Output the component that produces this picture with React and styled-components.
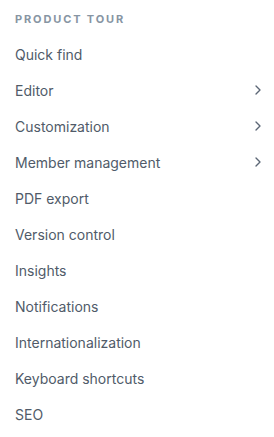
import React from "react";
import styled, { createGlobalStyle } from "styled-components";

const GlobalStyle = createGlobalStyle`
  body {
    margin: 0;
    background: #ffffff;
    font-family: Inter, "Noto Sans", sans-serif;
  }
`;

const Nav = styled.nav`
  width: 274px;
  padding: 12px 8px 0 15px;
  box-sizing: border-box;
`;

const Heading = styled.div`
  font-size: 11px;
  font-weight: 700;
  letter-spacing: 0.17em;
  color: #8795a3;
  line-height: 15px;
  margin-bottom: 9px;
`;

const List = styled.ul`
  list-style: none;
  margin: 0;
  padding: 0;
`;

const Item = styled.li`
  display: flex;
  align-items: center;
  justify-content: space-between;
  height: 36px;
  font-size: 14px;
  color: #505b69;
  cursor: pointer;
`;

const Chevron = () => (
  <svg width="16" height="16" viewBox="0 0 24 24" fill="none" stroke="#5b6675" strokeWidth="2" strokeLinecap="round" strokeLinejoin="round">
    <path d="m9 18 6-6-6-6" />
  </svg>
);

const items = [
  { label: "Quick find" },
  { label: "Editor", sub: true },
  { label: "Customization", sub: true },
  { label: "Member management", sub: true },
  { label: "PDF export" },
  { label: "Version control" },
  { label: "Insights" },
  { label: "Notifications" },
  { label: "Internationalization" },
  { label: "Keyboard shortcuts" },
  { label: "SEO" },
];

export default function App() {
  return (
    <>
      <GlobalStyle />
      <Nav>
        <Heading>PRODUCT TOUR</Heading>
        <List>
          {items.map((item) => (
            <Item key={item.label}>
              <span>{item.label}</span>
              {item.sub && <Chevron />}
            </Item>
          ))}
        </List>
      </Nav>
    </>
  );
}
